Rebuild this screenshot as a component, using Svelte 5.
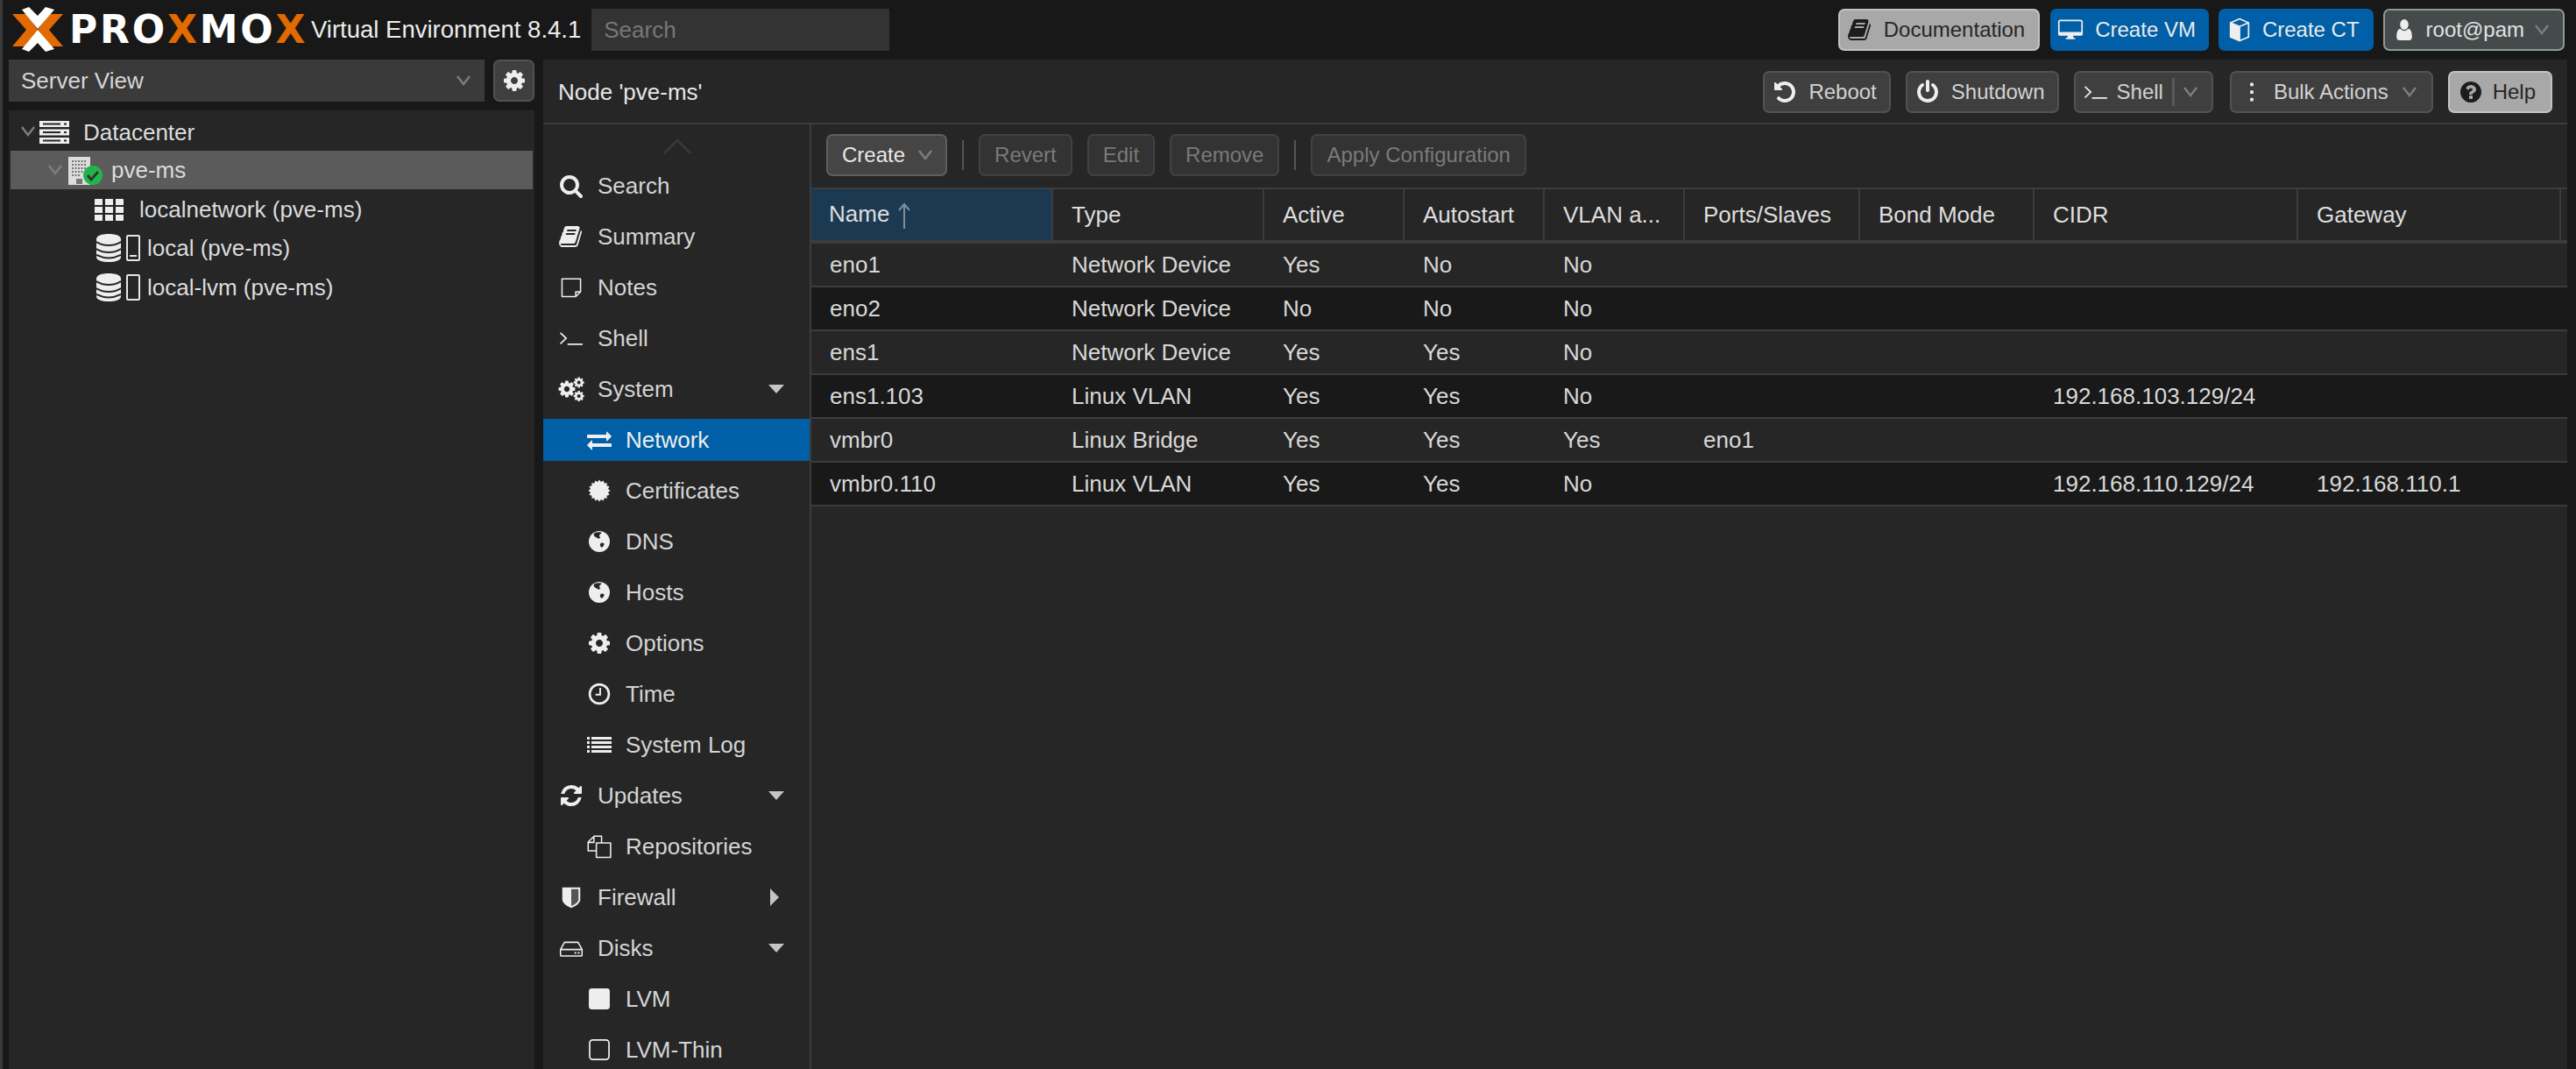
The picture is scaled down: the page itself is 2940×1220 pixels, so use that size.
<script>
  const cog = 'M1152 896q0-106-75-181t-181-75-181 75-75 181 75 181 181 75 181-75 75-181zm512-109v222q0 12-8 23t-20 13l-185 28q-19 54-39 91 35 50 107 138 10 12 10 25t-9 23q-27 37-99 108t-94 71q-12 0-26-9l-138-108q-44 23-91 38-16 136-29 186-7 28-36 28h-222q-14 0-24.5-8.5t-11.5-21.5l-28-184q-49-16-90-37l-141 107q-10 9-25 9-14 0-25-11-126-114-165-168-7-10-7-23 0-12 8-23 15-21 51-66.5t54-70.5q-27-50-41-99l-183-27q-13-2-21-12.5t-8-23.5v-222q0-12 8-23t19-13l186-28q14-46 39-92-40-57-107-138-10-12-10-24 0-10 9-23 26-36 98.5-107.5t94.5-71.5q13 0 26 10l138 107q44-23 91-38 16-136 29-186 7-28 36-28h222q14 0 24.5 8.5t11.5 21.5l28 184q49 16 90 37l142-107q9-9 24-9 13 0 25 10 129 119 165 170 7 8 7 22 0 12-8 23-15 21-51 66.5t-54 70.5q26 50 41 98l183 28q13 2 21 12.5t8 23.5z';

  const globe = '<circle cx="896" cy="896" r="768"/><path fill="#262626" d="M560 250q240-70 500-20-20 120-150 170-40 130 60 220-130 110-240 0-190-60-250-200 20-100 80-170zM1010 1010q130-60 250 50-30 200-180 290-120-90-130-180 0-110 60-160z"/>';

  const burst = Array.from({ length: 32 }, (_, i) => {
    const r = i % 2 ? 650 : 800;
    const a = (i * Math.PI) / 16;
    return `${Math.round(896 + r * Math.cos(a))},${Math.round(896 + r * Math.sin(a))}`;
  }).join(' ');

  const icons = {
    search: '<path d="M1216 832q0-185-131.500-316.500t-316.500-131.500-316.500 131.500-131.500 316.500 131.500 316.500 316.500 131.500 316.500-131.500 131.500-316.500zm512 832q0 52-38 90t-90 38q-54 0-90-38l-343-342q-179 124-399 124-143 0-273.500-55.500t-225-150-150-225-55.500-273.500 55.500-273.500 150-225 225-150 273.500-55.500 273.500 55.500 225 150 150 225 55.500 273.500q0 220-124 399l343 343q37 37 37 90z"/>',
    book: '<path d="M1639 478q40 57 18 129l-275 906q-19 64-76.500 107.500t-122.500 43.500h-923q-77 0-148.500-53.500t-99.500-131.500q-24-67-2-127 0-4 3-27t4-37q1-8-3-21.500t-3-19.500q2-11 8-21t16.500-23.500 16.500-23.500q23-38 45-91.500t30-91.500q3-10 .5-30t-.5-28q3-11 17-28t17-23q21-36 42-92t25-90q1-9-2.500-32t.5-28q4-13 22-30.500t22-22.500q19-26 42.500-84.500t27.500-96.500q1-8-3-25.500t-2-26.500q2-8 9-18t18-23 17-21q8-12 16.500-30.500t15-35 16-36 19.500-32 26.500-23.500 36-11.500 47.500 5.500l-1 3q38-9 51-9h761q74 0 114 56t18 130l-274 906q-36 119-71.500 153.500t-128.500 34.500h-869q-27 0-38 15-11 16-1 43 24 70 144 70h923q29 0 56-15.500t35-41.500l300-987q7-22 5-57 38 15 59 43zm-1064 2q-4 13 2 22.500t20 9.500h608q13 0 25.500-9.500t16.500-22.500l21-64q4-13-2-22.500t-20-9.500h-608q-13 0-25.500 9.500t-16.500 22.500zm-83 256q-4 13 2 22.500t20 9.500h608q13 0 25.500-9.500t16.500-22.500l21-64q4-13-2-22.500t-20-9.500h-608q-13 0-25.500 9.500t-16.500 22.500z"/>',
    note: '<path fill="none" stroke="currentColor" stroke-width="100" stroke-linejoin="round" d="M220 270h1352v950l-350 350H220zM1572 1220h-350v350"/>',
    terminal: '<path fill="none" stroke="currentColor" stroke-width="110" d="M100 500l420 400-420 400M620 1330h1100"/>',
    cogs: `<path transform="translate(-135 188) scale(.79)" d="${cog}"/><path transform="translate(1003 -32) scale(.5)" d="${cog}"/><path transform="translate(1003 960) scale(.5)" d="${cog}"/>`,
    exchange: '<path d="M1792 1184v192q0 13-9.500 22.500t-22.500 9.500h-1376v192q0 13-9.500 22.500t-22.500 9.500q-12 0-24-10l-319-320q-9-9-9-22 0-14 9-23l320-320q9-9 23-9 13 0 22.500 9.500t9.500 22.500v192h1376q13 0 22.500 9.500t9.500 22.500zm0-544q0 14-9 23l-320 320q-9 9-23 9-13 0-22.500-9.500t-9.500-22.500v-192h-1376q-13 0-22.500-9.500t-9.500-22.500v-192q0-13 9.500-22.500t22.500-9.500h1376v-192q0-14 9-23t23-9q12 0 24 10l319 319q9 9 9 23z"/>',
    certificate: `<polygon points="${burst}"/>`,
    globe,
    cog: `<path d="${cog}"/>`,
    clock: '<circle cx="896" cy="896" r="700" fill="none" stroke="currentColor" stroke-width="170"/><path fill="none" stroke="currentColor" stroke-width="120" d="M960 440v500H620"/>',
    list: '<path d="M0 320h190v190H0zM320 320h1472v190H320zM0 640h190v190H0zM320 640h1472v190H320zM0 960h190v190H0zM320 960h1472v190H320zM0 1280h190v190H0zM320 1280h1472v190H320z"/>',
    refresh: '<path d="M1639 1056q0 5-1 7-64 268-268 434.500t-478 166.500q-146 0-282.500-55t-243.500-157l-129 129q-19 19-45 19t-45-19-19-45v-448q0-26 19-45t45-19h448q26 0 45 19t19 45-19 45l-137 137q71 66 161 102t187 36q134 0 250-65t186-179q11-17 53-117 8-23 30-23h192q13 0 22.500 9.500t9.500 22.500zm25-800v448q0 26-19 45t-45 19h-448q-26 0-45-19t-19-45 19-45l138-138q-148-137-349-137-134 0-250 65t-186 179q-11 17-53 117-8 23-30 23h-199q-13 0-22.500-9.500t-9.500-22.500v-7q65-268 270-434.500t480-166.500q146 0 284 55.500t245 156.500l130-129q19-19 45-19t45 19 19 45z"/>',
    files: '<path fill="none" stroke="currentColor" stroke-width="100" stroke-linejoin="round" d="M1060 640V140H520L80 580v640h600M500 160v440H90M680 640h1040v1060H680zM680 640v1060"/>',
    shield: '<path d="M240 180h1312v900q0 300-656 600-656-300-656-600z"/><path fill="#555" d="M896 310h526v770q0 200-526 460z"/>',
    hdd: '<path fill="none" stroke="currentColor" stroke-width="100" stroke-linejoin="round" d="M110 1000l270-500q20-30 60-30h912q40 0 60 30l270 500v420q0 50-50 50H160q-50 0-50-50zM110 1000h1572"/><path d="M1130 1180h130v130h-130zM1370 1180h130v130h-130z"/>',
    square: '<rect x="130" y="130" width="1532" height="1532" rx="220"/>',
    squareo: '<rect x="190" y="190" width="1412" height="1412" rx="220" fill="none" stroke="currentColor" stroke-width="110"/>',
    undo: '<path d="M1664 896q0 156-61 298t-164 245-245 164-298 61q-172 0-327-72.500t-264-204.500q-7-10-6.500-22.500t8.500-20.500l137-138q10-9 25-9 16 2 23 12 73 95 179 147t225 52q104 0 198.500-40.500t163.500-109.500 109.500-163.500 40.500-198.500-40.500-198.500-109.500-163.500-163.500-109.500-198.500-40.500q-98 0-188 35.500t-160 101.500l137 138q31 30 14 69-17 40-59 40h-448q-26 0-45-19t-19-45v-448q0-42 40-59 39-17 69 14l130 129q107-101 244.500-156.500t284.500-55.500q156 0 298 61t245 164 164 245 61 298z"/>',
    power: '<path d="M1664 896q0 156-61 298t-164 245-245 164-298 61-298-61-245-164-164-245-61-298q0-182 80.500-343t226.500-270q43-32 95.500-25t83.500 50q32 42 24.500 94.500t-49.500 84.500q-98 74-151.500 181t-53.500 228q0 104 40.500 198.500t109.500 163.500 163.500 109.500 198.500 40.500 198.500-40.500 163.500-109.500 109.500-163.500 40.500-198.500q0-121-53.500-228t-151.500-181q-42-32-49.500-84.500t24.500-94.500q31-43 84-50t95 25q146 109 226.500 270t80.500 343zm-640-768v640q0 52-38 90t-90 38-90-38-38-90v-640q0-52 38-90t90-38 90 38 38 90z"/>',
    dots: '<rect x="776" y="230" width="240" height="240" rx="60"/><rect x="776" y="776" width="240" height="240" rx="60"/><rect x="776" y="1322" width="240" height="240" rx="60"/>',
    help: '<path d="M1024 1376v-192q0-14-9-23t-23-9h-192q-14 0-23 9t-9 23v192q0 14 9 23t23 9h192q14 0 23-9t9-23zm256-672q0-88-55.500-163t-138.500-116-170-41q-243 0-371 213-15 24 8 42l132 100q7 6 19 6 16 0 25-12 53-68 86-92 34-24 86-24 48 0 85.500 26t37.500 59q0 38-20 61t-68 45q-63 28-115.500 86.500t-52.500 125.500v36q0 14 9 23t23 9h192q14 0 23-9t9-23q0-19 21.500-49.500t54.500-49.500q32-18 49-28.500t46-35 44.500-48 28-60.500 12.500-81zm384 192q0 209-103 385.500t-279.500 279.500-385.500 103-385.500-103-279.500-279.500-103-385.500 103-385.500 279.500-279.500 385.500-103 385.500 103 279.500 279.500 103 385.500z"/>',
    user: '<path d="M1600 1405q0 120-73 189.500t-194 69.500h-874q-121 0-194-69.500t-73-189.500q0-53 3.500-103.500t14-109 26.500-108.500 43-97.500 62-81 85.500-53.500 111.500-20q9 0 42 21.500t74.500 48 108 48 133.500 21.500 133.500-21.500 108-48 74.500-48 42-21.500q61 0 111.500 20t85.500 53.500 62 81 43 97.500 26.500 108.500 14 109 3.500 103.500zm-320-893q0 159-112.500 271.500t-271.500 112.500-271.500-112.500-112.500-271.500 112.500-271.500 271.500-112.500 271.500 112.500 112.500 271.500z" transform="translate(180 0) scale(.8 1)"/>',
    desktop: '<rect x="50" y="210" width="1692" height="1060" rx="110" fill="none" stroke="currentColor" stroke-width="110"/><path d="M60 1060h1672v210H60zM720 1270h352l50 220h120v90H550v-90h120z"/>',
    cube: '<path fill="none" stroke="currentColor" stroke-width="110" stroke-linejoin="round" d="M896 100l660 280v1040l-660 280-660-280V380zM236 380l660 280 660-280M896 660v1040"/><path d="M236 380l660 280v1040l-660-280z"/>'
  };

  const nav = [
    { text: 'Search', icon: 'search' },
    { text: 'Summary', icon: 'book' },
    { text: 'Notes', icon: 'note' },
    { text: 'Shell', icon: 'terminal' },
    { text: 'System', icon: 'cogs', arrow: 'down' },
    { text: 'Network', icon: 'exchange', child: true, active: true },
    { text: 'Certificates', icon: 'certificate', child: true },
    { text: 'DNS', icon: 'globe', child: true },
    { text: 'Hosts', icon: 'globe', child: true },
    { text: 'Options', icon: 'cog', child: true },
    { text: 'Time', icon: 'clock', child: true },
    { text: 'System Log', icon: 'list', child: true },
    { text: 'Updates', icon: 'refresh', arrow: 'down' },
    { text: 'Repositories', icon: 'files', child: true },
    { text: 'Firewall', icon: 'shield', arrow: 'right' },
    { text: 'Disks', icon: 'hdd', arrow: 'down' },
    { text: 'LVM', icon: 'square', child: true },
    { text: 'LVM-Thin', icon: 'squareo', child: true }
  ];

  const columns = [
    { title: 'Name', width: 276 },
    { title: 'Type', width: 241 },
    { title: 'Active', width: 160 },
    { title: 'Autostart', width: 160 },
    { title: 'VLAN a...', width: 160 },
    { title: 'Ports/Slaves', width: 200 },
    { title: 'Bond Mode', width: 199 },
    { title: 'CIDR', width: 301 },
    { title: 'Gateway', width: 300 },
    { title: '', width: 7 }
  ];

  const rows = [
    ['eno1', 'Network Device', 'Yes', 'No', 'No', '', '', '', ''],
    ['eno2', 'Network Device', 'No', 'No', 'No', '', '', '', ''],
    ['ens1', 'Network Device', 'Yes', 'Yes', 'No', '', '', '', ''],
    ['ens1.103', 'Linux VLAN', 'Yes', 'Yes', 'No', '', '', '192.168.103.129/24', ''],
    ['vmbr0', 'Linux Bridge', 'Yes', 'Yes', 'Yes', 'eno1', '', '', ''],
    ['vmbr0.110', 'Linux VLAN', 'Yes', 'Yes', 'No', '', '', '192.168.110.129/24', '192.168.110.1']
  ];
</script>

{#snippet ico(name)}
  <svg class="ico" viewBox="0 0 1792 1792" aria-hidden="true">{@html icons[name]}</svg>
{/snippet}

{#snippet chev()}
  <svg class="chev" viewBox="0 0 18 12" aria-hidden="true"><path d="M2 1l7 9 7-9" /></svg>
{/snippet}

<div class="app">
  <header class="top">
    <div class="logo">
      <svg class="mark" viewBox="0 0 59 52" aria-hidden="true">
        <path fill="#e36a00" d="M1 8h16l13 18-15 19H1l16-19zM59 8H43L30 26l15 19h14L43 26z" />
        <path fill="#fff" d="M12 3l8-3 10 10L39 0l10 3-19 22zM12 48l8 3 10-10 9 10 10-3-19-22z" />
      </svg>
      <span class="word">PRO<b>X</b>MO<b>X</b></span>
    </div>
    <span class="version">Virtual Environment 8.4.1</span>
    <div class="search-box">Search</div>
    <div class="top-actions">
      <button class="btn light doc">{@render ico('book')}Documentation</button>
      <button class="btn blue vm">{@render ico('desktop')}Create VM</button>
      <button class="btn blue ct">{@render ico('cube')}Create CT</button>
      <button class="btn user">{@render ico('user')}root@pam{@render chev()}</button>
    </div>
  </header>

  <div class="body">
    <aside class="left">
      <div class="view-row">
        <div class="view-select">Server View{@render chev()}</div>
        <button class="btn gear">{@render ico('cog')}</button>
      </div>
      <div class="tree">
        <div class="tree-row d0">
          {@render chev()}
          <svg class="dc" viewBox="0 0 34 26" aria-hidden="true">
            <path fill="#eee" d="M0 0h34v7H0zM0 9.500h34v7H0zM0 19h34v7H0z" />
            <path fill="#262626" d="M4 2.500h20v2H4zM4 12h20v2H4zM4 21.500h20v2H4zM28 2.500h3v2h-3zM28 12h3v2h-3zM28 21.500h3v2h-3z" />
          </svg>
          <span>Datacenter</span>
        </div>
        <div class="tree-row d1 selected">
          {@render chev()}
          <span class="node-icon">
            <svg class="building" viewBox="0 0 25 32" aria-hidden="true">
              <path fill="#ddd" d="M0 0h25v32H0z" />
              <path fill="#777" stroke="#777" stroke-dasharray="2 1.500" stroke-width="2" d="M4 5h16M4 9h16M4 13h16M4 17h16M4 21h10" />
              <path fill="#777" d="M9 25h7v6H9z" />
            </svg>
            <svg class="badge" viewBox="0 0 22 22" aria-hidden="true">
              <circle cx="11" cy="11" r="11" fill="#21b64c" />
              <path fill="none" stroke="#333" stroke-width="3" d="M5 11l4 5 8-9" />
            </svg>
          </span>
          <span>pve-ms</span>
        </div>
        <div class="tree-row d2 net">
          <svg class="th" viewBox="0 0 33 25" aria-hidden="true">
            <path fill="#eee" d="M0 1a1 1 0 0 1 1-1h8v7H0zM12 0h9v7h-9zM24 0h8a1 1 0 0 1 1 1v6h-9zM0 9h9v7H0zM12 9h9v7h-9zM24 9h9v7h-9zM0 18h9v7H1a1 1 0 0 1-1-1zM12 18h9v7h-9zM24 18h9v6a1 1 0 0 1-1 1h-8z" />
          </svg>
          <span>localnetwork (pve-ms)</span>
        </div>
        {#each ['local (pve-ms)', 'local-lvm (pve-ms)'] as label, i}
          <div class="tree-row d2 store">
            <svg class="db" viewBox="0 0 28 32" aria-hidden="true">
              <path fill="#eee" d="M0 6C0 2 6 0 14 0s14 2 14 6v20c0 4-6 6-14 6s-14-2-14-6z" />
              <path fill="none" stroke="#262626" stroke-width="2" d="M0 9q14 8 28 0M0 17q14 8 28 0M0 24q14 7 28 0" />
            </svg>
            <span class="bar">{#if i === 0}<i></i>{/if}</span>
            <span>{label}</span>
          </div>
        {/each}
      </div>
    </aside>

    <main class="panel">
      <div class="panel-head">
        <span class="title">Node 'pve-ms'</span>
        <div class="head-actions">
          <button class="btn">{@render ico('undo')}Reboot</button>
          <button class="btn">{@render ico('power')}Shutdown</button>
          <button class="btn shell">{@render ico('terminal')}Shell<i class="split"></i>{@render chev()}</button>
          <button class="btn bulk">{@render ico('dots')}Bulk Actions{@render chev()}</button>
          <button class="btn light help">{@render ico('help')}Help</button>
        </div>
      </div>
      <div class="panel-body">
        <nav class="menu">
          <svg class="scroll-up" viewBox="0 0 32 18" aria-hidden="true"><path d="M1 17L16 2l15 15" /></svg>
          {#each nav as item}
            <div class="item" class:child={item.child} class:active={item.active}>
              {@render ico(item.icon)}
              <span>{item.text}</span>
              {#if item.arrow}<i class="tri {item.arrow}"></i>{/if}
            </div>
          {/each}
        </nav>
        <section class="content">
          <div class="toolbar">
            <button class="btn create">Create{@render chev()}</button>
            <i class="sep"></i>
            <button class="btn off">Revert</button>
            <button class="btn off">Edit</button>
            <button class="btn off">Remove</button>
            <i class="sep"></i>
            <button class="btn off">Apply Configuration</button>
          </div>
          <table class="grid">
            <colgroup>
              {#each columns as col}<col style="width:{col.width}px" />{/each}
            </colgroup>
            <thead>
              <tr>
                {#each columns as col, i}
                  <th class:sorted={i === 0}>
                    {col.title}
                    {#if i === 0}
                      <svg class="sort" viewBox="0 0 14 30" aria-hidden="true"><path d="M7 30V2M1 9l6-7 6 7" /></svg>
                    {/if}
                  </th>
                {/each}
              </tr>
            </thead>
            <tbody>
              {#each rows as row}
                <tr>
                  {#each row as cell}<td>{cell}</td>{/each}
                  <td></td>
                </tr>
              {/each}
            </tbody>
          </table>
        </section>
      </div>
    </main>
  </div>
</div>

<style>
  :global(body) {
    margin: 0;
    background: #181818;
  }

  .app {
    width: 2940px;
    height: 1220px;
    box-sizing: border-box;
    overflow: hidden;
    background: #181818;
    border-left: 3px solid #3a3a3a;
    color: #dcdcdc;
    font-family: "Liberation Sans", Arial, sans-serif;
    font-size: 26px;
  }

  .ico {
    width: 28px;
    height: 28px;
    flex: none;
    fill: currentColor;
    overflow: visible;
  }

  .chev {
    width: 18px;
    height: 12px;
    flex: none;
    fill: none;
    stroke: #7d7d7d;
    stroke-width: 2.5;
  }

  .top {
    height: 68px;
    box-sizing: border-box;
    display: flex;
    align-items: center;
    padding: 0 13px 0 10px;
  }

  .logo {
    display: flex;
    align-items: center;
    gap: 7px;
    width: 342px;
    color: #fff;
  }

  .mark {
    width: 59px;
    height: 52px;
    flex: none;
  }

  .word {
    font-family: "DejaVu Sans", sans-serif;
    font-weight: 700;
    font-size: 44px;
    letter-spacing: 2.800px;
    line-height: 1;
  }

  .word b {
    color: #e36a00;
  }

  .version {
    font-size: 27.500px;
    color: #ececec;
    white-space: nowrap;
  }

  .search-box {
    width: 340px;
    height: 48px;
    box-sizing: border-box;
    margin-left: 12px;
    padding-left: 14px;
    display: flex;
    align-items: center;
    background: #333;
    color: #777;
  }

  .top-actions {
    margin-left: auto;
    display: flex;
    gap: 11px;
  }

  .btn {
    height: 48px;
    box-sizing: border-box;
    display: flex;
    align-items: center;
    gap: 13px;
    padding: 0 14px 0 9px;
    border: 2px solid #525252;
    border-radius: 7px;
    background: #3f3f3f;
    color: #d2d2d2;
    font: inherit;
    font-size: 24px;
    white-space: nowrap;
  }

  .btn .ico {
    color: #eee;
  }

  .btn.light {
    background: #a8a8a8;
    border-color: #c2c2c2;
    color: #262626;
  }

  .btn.light .ico {
    color: #1c1c1c;
  }

  .btn.doc {
    margin-right: 1px;
    padding-right: 15px;
  }

  .btn.blue {
    background: #005fa6;
    border-color: #005fa6;
    color: #eaeaea;
  }

  .btn.vm {
    gap: 14px;
    padding: 0 13px 0 7px;
  }

  .btn.ct {
    gap: 12px;
    padding: 0 14px 0 8px;
  }

  .btn.user {
    background: #454b4b;
    border-color: #8d9b98;
    color: #e2e2e2;
    gap: 11px;
    padding: 0 15px 0 8px;
  }

  .btn.gear {
    width: 47px;
    padding: 0;
    justify-content: center;
    flex: none;
  }

  .btn.create {
    background: #454545;
    border-color: #5f5f5f;
    color: #e8e8e8;
    padding: 0 14px 0 16px;
    gap: 14px;
  }

  .btn.off {
    background: #333;
    border-color: #424242;
    color: #7a7a7a;
    padding: 0 16px;
  }

  .body {
    display: flex;
    gap: 10px;
    padding-left: 7px;
    height: 1152px;
  }

  .left {
    width: 600px;
    flex: none;
    display: flex;
    flex-direction: column;
    gap: 10px;
  }

  .view-row {
    display: flex;
    gap: 10px;
  }

  .view-select {
    flex: 1;
    height: 48px;
    display: flex;
    align-items: center;
    justify-content: space-between;
    padding: 0 15px 0 14px;
    background: #3a3a3a;
    color: #d6d6d6;
  }

  .tree {
    flex: 1;
    background: #262626;
    padding: 2px;
  }

  .tree-row {
    height: 44px;
    display: flex;
    align-items: center;
    white-space: nowrap;
  }

  .tree-row.selected {
    background: #5b5b5b;
  }

  .tree-row.d0 {
    padding-left: 11px;
    gap: 4px;
  }

  .tree-row.d0 span {
    margin-left: 12px;
    padding-top: 3px;
  }

  .dc {
    width: 34px;
    height: 26px;
    flex: none;
    margin-top: 2px;
  }

  .tree-row.d1 {
    padding-left: 42px;
    gap: 6px;
  }

  .node-icon {
    position: relative;
    width: 25px;
    height: 32px;
    flex: none;
    margin-top: 2px;
    margin-right: 18px;
  }

  .building {
    width: 25px;
    height: 32px;
    display: block;
  }

  .badge {
    position: absolute;
    left: 17px;
    top: 10px;
    width: 22px;
    height: 22px;
  }

  .tree-row.d2.net {
    padding-left: 96px;
    gap: 18px;
    margin-top: 1px;
  }

  .th {
    width: 33px;
    height: 25px;
    flex: none;
  }

  .tree-row.d2.store {
    padding-left: 98px;
    gap: 6px;
  }

  .tree-row.store + .tree-row.store {
    margin-top: 1px;
  }

  .db {
    width: 28px;
    height: 32px;
    flex: none;
  }

  .bar {
    position: relative;
    width: 16px;
    height: 30px;
    box-sizing: border-box;
    flex: none;
    margin-right: 2px;
    border: 2px solid #e6e6e6;
    border-radius: 2px;
  }

  .bar i {
    position: absolute;
    left: 2px;
    right: 2px;
    bottom: 3px;
    height: 2px;
    background: #e6e6e6;
  }

  .panel {
    width: 2310px;
    flex: none;
    display: flex;
    flex-direction: column;
    background: #262626;
  }

  .panel-head {
    height: 74px;
    box-sizing: border-box;
    flex: none;
    display: flex;
    align-items: center;
    padding: 0 17px 0 17px;
    border-bottom: 2px solid #3c3c3c;
  }

  .title {
    color: #e6e6e6;
    padding-top: 2px;
  }

  .head-actions {
    margin-left: auto;
    display: flex;
    gap: 17px;
    margin-top: 2px;
  }

  .btn.shell {
    gap: 10px;
    padding: 0 15px 0 9px;
  }

  .split {
    width: 3px;
    height: 32px;
    margin-right: -1px;
    background: #5a5a5a;
  }

  .btn.bulk {
    margin-left: 2px;
    gap: 11px;
    padding-right: 16px;
  }

  .btn.bulk .chev {
    margin-left: 4px;
  }

  .btn.help {
    gap: 11px;
    padding: 0 17px 0 10px;
  }

  .panel-body {
    flex: 1;
    min-height: 0;
    display: flex;
  }

  .menu {
    width: 306px;
    box-sizing: border-box;
    flex: none;
    position: relative;
    padding-top: 46px;
    border-right: 2px solid #3c3c3c;
    display: flex;
    flex-direction: column;
    gap: 10px;
    color: #d4d4d4;
  }

  .scroll-up {
    position: absolute;
    left: 137px;
    top: 16px;
    width: 32px;
    height: 18px;
    fill: none;
    stroke: #3a3a3a;
    stroke-width: 2.500;
  }

  .item {
    height: 48px;
    flex: none;
    display: flex;
    align-items: center;
    gap: 16px;
    padding: 0 29px 0 18px;
  }

  .item .ico {
    color: #eee;
  }

  .item.child {
    padding-left: 50px;
  }

  .item.active {
    background: #005fa6;
    color: #eee;
  }

  .tri {
    margin-left: auto;
    width: 0;
    height: 0;
  }

  .tri.down {
    border-left: 9px solid transparent;
    border-right: 9px solid transparent;
    border-top: 10px solid #c4c4c4;
  }

  .tri.right {
    margin-right: 6px;
    border-top: 10px solid transparent;
    border-bottom: 10px solid transparent;
    border-left: 10px solid #c4c4c4;
  }

  .content {
    flex: 1;
    min-width: 0;
  }

  .toolbar {
    height: 74px;
    box-sizing: border-box;
    display: flex;
    align-items: center;
    gap: 17px;
    padding: 0 0 2px 17px;
    border-bottom: 2px solid #3c3c3c;
  }

  .sep {
    width: 2px;
    height: 34px;
    background: #555;
  }

  .grid {
    table-layout: fixed;
    width: 2004px;
    border-collapse: separate;
    border-spacing: 0;
  }

  th {
    height: 58px;
    padding: 0 0 0 21px;
    box-sizing: content-box;
    border-right: 2px solid #3c3c3c;
    border-bottom: 4px solid #3c3c3c;
    font-weight: 400;
    text-align: left;
    color: #dedede;
    white-space: nowrap;
    overflow: hidden;
  }

  th.sorted {
    padding-left: 20px;
    background: #1b3a52;
  }

  th:last-child {
    border-right: 0;
  }

  .sort {
    width: 14px;
    height: 30px;
    margin-left: 2px;
    vertical-align: middle;
    fill: none;
    stroke: #7f8f9b;
    stroke-width: 2;
  }

  td {
    height: 47px;
    padding: 1px 0 0 21px;
    box-sizing: content-box;
    border-bottom: 2px solid #3c3c3c;
    color: #d8d8d8;
    white-space: nowrap;
    overflow: hidden;
  }

  tbody tr:nth-child(even) td {
    background: #191919;
  }
</style>
